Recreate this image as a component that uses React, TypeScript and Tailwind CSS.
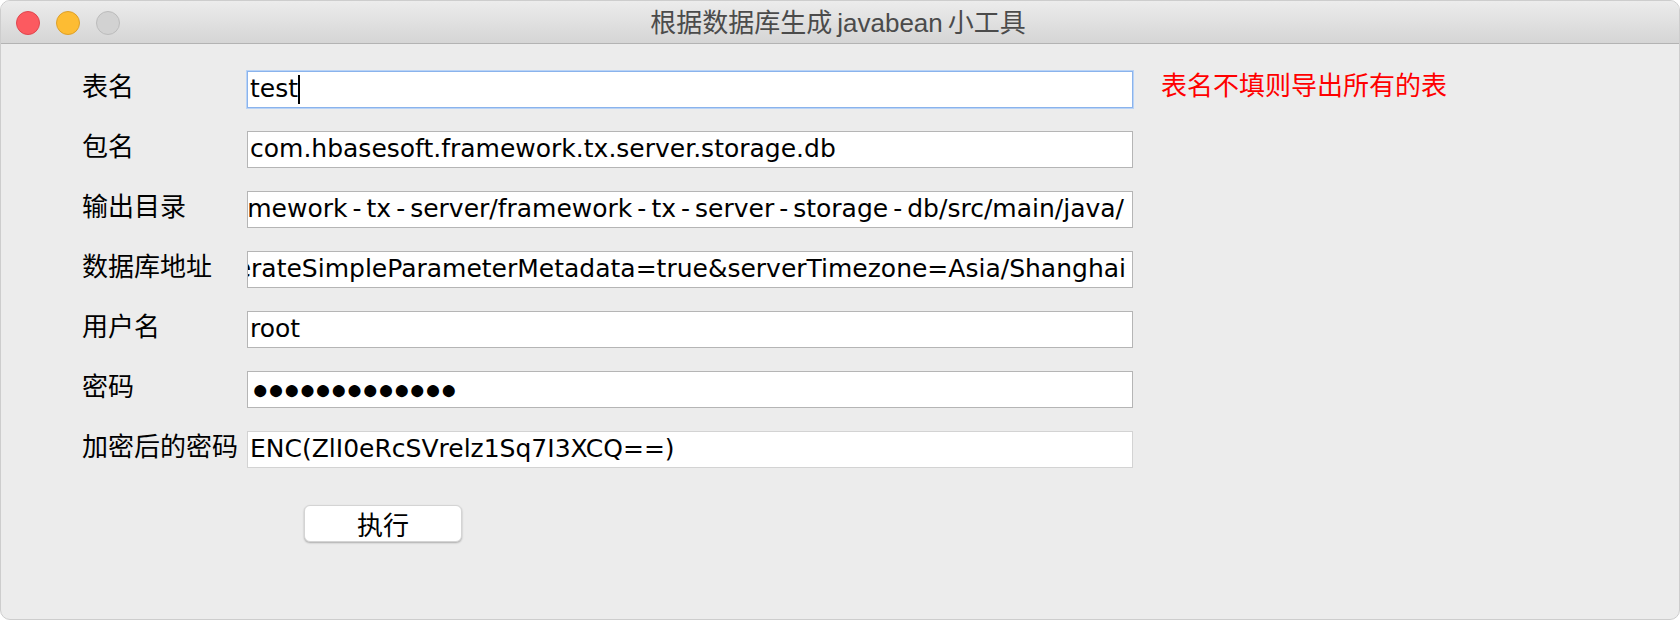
import type { ReactNode } from "react";

const CJK = "font-['Noto_Sans_CJK_SC',sans-serif]";
const MONOLINE = "font-['DejaVu_Sans','Noto_Sans_CJK_SC',sans-serif]";

const rows: { label: string; value: string; scroll?: boolean; pr?: string; kind?: "focus" | "secret" | "readonly" }[] = [
  { label: "表名", value: "test", kind: "focus" },
  { label: "包名", value: "com.hbasesoft.framework.tx.server.storage.db" },
  {
    label: "输出目录",
    value: "/Users/dev/workspace/framework/framework-tx/framework-tx-server/framework-tx-server-storage-db/src/main/java/",
    scroll: true,
    pr: "pr-[8px]",
  },
  {
    label: "数据库地址",
    value:
      "jdbc:mysql://127.0.0.1:3306/tx?useUnicode=true&characterEncoding=utf8&useSSL=false&generateSimpleParameterMetadata=true&serverTimezone=Asia/Shanghai",
    scroll: true,
    pr: "pr-[6px]",
  },
  { label: "用户名", value: "root" },
  { label: "密码", value: "●".repeat(13), kind: "secret" },
  { label: "加密后的密码", value: "ENC(ZlI0eRcSVrelz1Sq7I3XCQ==)", kind: "readonly" },
];

// Lucida Grande draws a much wider hyphen than DejaVu, pad them out
function Wide({ text }: { text: string }) {
  const parts = text.split("-");
  return (
    <span>
      {parts.map((p, i) => (
        <span key={i}>
          {p}
          {i < parts.length - 1 && <span className="px-[5px]">-</span>}
        </span>
      ))}
    </span>
  );
}

function Light({ className }: { className: string }) {
  return <span className={`h-[24px] w-[24px] rounded-full border ${className}`} />;
}

function Field({ row }: { row: (typeof rows)[number] }) {
  let border = "border-[#b5b5b5]";
  if (row.kind === "focus") border = "border-[#8ab3ec] ring-1 ring-[#b9d3f6]";
  if (row.kind === "readonly") border = "border-[#d3d3d3]";

  let content: ReactNode = <Wide text={row.value} />;
  if (row.kind === "focus") {
    content = (
      <>
        <span>{row.value}</span>
        <span className="mt-[3px] h-[29px] w-[2px] bg-black" />
      </>
    );
  }
  if (row.kind === "secret") {
    content = (
      <span className="font-['Liberation_Sans',sans-serif] text-[28px] leading-none tracking-[-1.2px]">{row.value}</span>
    );
  }

  return (
    <div
      className={`flex h-[37px] w-[886px] overflow-hidden whitespace-nowrap border bg-white text-[25px] leading-[33px] text-black ${MONOLINE} ${border} ${
        row.scroll ? `justify-end ${row.pr}` : "pl-[2px]"
      } ${row.kind === "secret" ? "items-center pl-[4px]" : "items-start"}`}
    >
      {content}
    </div>
  );
}

export default function App() {
  return (
    <div className="h-[620px] w-[1680px] bg-white">
      <div className="flex h-full flex-col overflow-hidden rounded-[10px] border border-[#cdcdcd] bg-[#ececec]">
        <div className="grid h-[43px] shrink-0 grid-cols-[1fr_auto_1fr] items-center border-b border-[#b3b3b3] bg-gradient-to-b from-[#ececec] to-[#d5d5d5]">
          <div className="flex items-center gap-[16px] pl-[15px] pt-[1px]">
            <Light className="border-[#e0464e] bg-[#fc5a60]" />
            <Light className="border-[#dda02a] bg-[#fdbc33]" />
            <Light className="border-[#bcbcbc] bg-[#d2d2d2]" />
          </div>
          <div className="pr-[4px] pt-[2px] text-[26px] text-[#4b4b4b] font-['Liberation_Sans','Noto_Sans_CJK_SC',sans-serif]">
            根据数据库生成<span className="px-[5px]">javabean</span>小工具
          </div>
          <div />
        </div>

        <div className="flex flex-col gap-[23px] pl-[81px] pt-[27px]">
          {rows.map((row) => (
            <div key={row.label} className="flex items-start">
              <div className={`w-[165px] pt-[1px] text-[26px] leading-[26px] text-black ${CJK}`}>{row.label}</div>
              <Field row={row} />
              {row.kind === "focus" && (
                <div className={`ml-[28px] text-[26px] leading-[26px] text-[#ff0000] ${CJK}`}>
                  表名不填则导出所有的表
                </div>
              )}
            </div>
          ))}
        </div>

        <div className="pl-[303px] pt-[37px]">
          <button
            type="button"
            className={`flex h-[37px] w-[158px] items-center justify-center rounded-[6px] border border-[#d4d4d4] bg-white text-[26px] leading-none text-black shadow-[0_1px_2px_rgba(0,0,0,0.28)] ${CJK}`}
          >
            执行
          </button>
        </div>
      </div>
    </div>
  );
}
